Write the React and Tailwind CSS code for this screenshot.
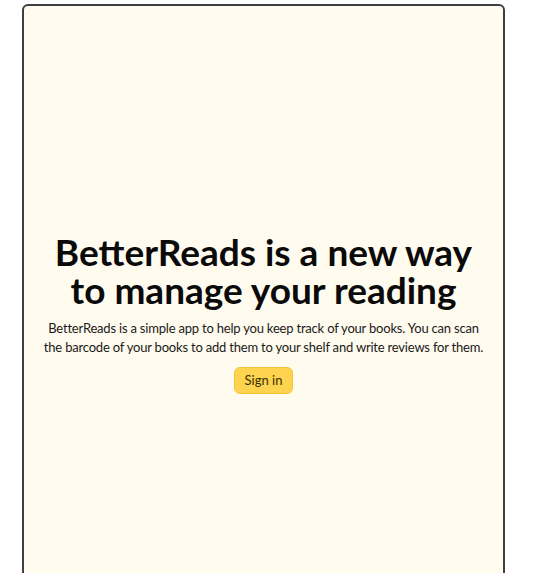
export default function App() {
  return (
    <div className="h-screen overflow-hidden bg-white" style={{ fontFamily: 'Lato, "Noto Sans", sans-serif' }}>
      <div className="ml-[22px] mt-[4px] w-[483px] h-[600px] rounded-md border-2 border-[#3f3f3f] bg-[#fffbee]">
        <div className="flex flex-col items-center px-4 pt-[227px] text-center">
          <h1 className="whitespace-nowrap text-[37px] font-bold leading-[38px] text-[#0a0a0a]">
            BetterReads is a new way
            <br />
            to manage your reading
          </h1>
          <p className="mt-[10px] whitespace-nowrap text-[13px] leading-[19px] tracking-[-0.2px] text-[#1a1a1a]">
            BetterReads is a simple app to help you keep track of your books. You can scan
            <br />
            the barcode of your books to add them to your shelf and write reviews for them.
          </p>
          <button className="mt-[10px] h-[27px] rounded-md border border-[#f3c433] bg-[#fdd34f] px-[10px] text-[13px] text-[#3a3000]">
            Sign in
          </button>
        </div>
      </div>
    </div>
  );
}
